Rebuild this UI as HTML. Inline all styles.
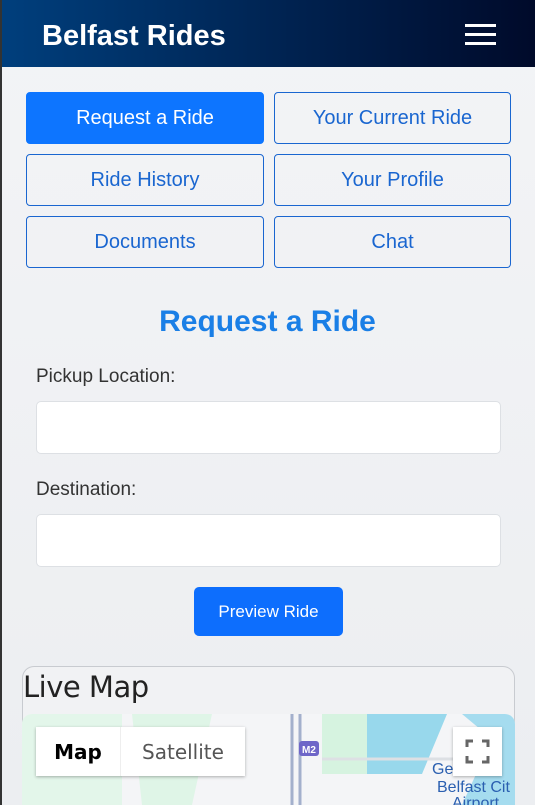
<!DOCTYPE html>
<html><head><style>
html,body{margin:0;width:535px;height:805px;overflow:hidden}
body{font-family:"Liberation Sans",sans-serif;background:linear-gradient(#f3f4f6,#eceef1);position:relative}
.lb{position:absolute;left:0;top:0;width:2px;height:805px;background:#333}
.hd{position:absolute;left:0;top:0;width:535px;height:67px;background:linear-gradient(90deg,#003f7d,#000a2a)}
.hd h1{position:absolute;left:42px;top:20px;margin:0;color:#fff;font:bold 29px "Liberation Sans",sans-serif}
.hb{position:absolute;left:465px;width:31px;height:3px;background:#fff}
.b{position:absolute;width:238px;height:52px;border:1px solid #1a66d0;border-radius:4px;box-sizing:border-box;color:#1a66d0;font:20px "Liberation Sans",sans-serif;display:flex;align-items:center;justify-content:center}
.b.a{background:#0d75ff;border-color:#0d75ff;color:#fff}
h2{position:absolute;top:305px;left:0;width:535px;text-align:center;margin:0;font:bold 30px "Liberation Sans",sans-serif;color:#1a7fe6}
.l{position:absolute;left:36px;font-size:19px;color:#333}
.i{position:absolute;left:36px;width:465px;height:53px;background:#fff;border:1px solid #dde0e4;border-radius:5px;box-sizing:border-box}
.pv{position:absolute;left:194px;top:587px;width:149px;height:49px;background:#0d6efd;color:#fff;border-radius:5px;font-size:17px;display:flex;align-items:center;justify-content:center}
.card{position:absolute;left:22px;top:666px;width:493px;height:160px;border:1px solid #c8cbd0;border-radius:12px;box-sizing:border-box;background:#f1f2f4}
.lm{position:absolute;left:23px;top:670px;font:29px "DejaVu Sans",sans-serif;color:#222;letter-spacing:-0.5px}
.map{position:absolute;left:22px;top:714px;width:493px;height:91px;background:#f4f5f7;border-radius:10px 10px 0 0;overflow:hidden}
</style></head><body>
<div class="hd"><h1>Belfast Rides</h1><div class="hb" style="top:24px"></div><div class="hb" style="top:33px"></div><div class="hb" style="top:42px"></div></div>
<div class="lb"></div>
<div class="b a" style="left:26px;top:92px">Request a Ride</div>
<div class="b" style="left:274px;top:92px;width:237px">Your Current Ride</div>
<div class="b" style="left:26px;top:154px">Ride History</div>
<div class="b" style="left:274px;top:154px;width:237px">Your Profile</div>
<div class="b" style="left:26px;top:216px">Documents</div>
<div class="b" style="left:274px;top:216px;width:237px">Chat</div>
<h2>Request a Ride</h2>
<div class="l" style="top:366px">Pickup Location:</div>
<div class="i" style="top:401px"></div>
<div class="l" style="top:479px">Destination:</div>
<div class="i" style="top:514px"></div>
<div class="pv">Preview Ride</div>
<div class="card" style="height:139px;border-bottom:none;border-radius:12px 12px 0 0"></div>
<div class="lm">Live Map</div>
<div class="map">
<svg width="493" height="91" style="position:absolute;left:0;top:0">
<rect x="0" y="0" width="100" height="91" fill="#e3f6ea"/>
<path d="M110 0 H190 L170 91 H120 Z" fill="#dff5e7"/>
<rect x="300" y="0" width="45" height="60" fill="#d6f3e0"/>
<path d="M345 0 H493 V91 H440 L470 25 L440 0 Z" fill="#a5dcef"/>
<path d="M345 0 H425 L400 60 H345 Z" fill="#98d8ec"/>
<path d="M270 0 V91 M278 0 V91" stroke="#a3b0cc" stroke-width="3"/>
<path d="M300 45 L440 45" stroke="#dde0e4" stroke-width="3"/>
<rect x="277" y="27" width="20" height="15" rx="3" fill="#6e66c8"/>
<text x="280" y="39" font-size="10" fill="#fff" font-family="Liberation Sans" font-weight="bold">M2</text>
<text x="410" y="60" font-size="16" fill="#2a5fb0" font-family="Liberation Sans">Ge</text>
<text x="415" y="78" font-size="16" fill="#2a5fb0" font-family="Liberation Sans">Belfast Cit</text>
<text x="430" y="94" font-size="16" fill="#2a5fb0" font-family="Liberation Sans">Airport</text>
</svg>
<div style="position:absolute;left:14px;top:13px;width:209px;height:49px;background:#fff;box-shadow:0 1px 3px rgba(0,0,0,.3);display:flex;font-family:'DejaVu Sans',sans-serif;font-size:20px">
<div style="width:84px;display:flex;align-items:center;justify-content:center;font-weight:bold;color:#000;border-right:1px solid #eee">Map</div>
<div style="flex:1;display:flex;align-items:center;justify-content:center;color:#555">Satellite</div></div>
<div style="position:absolute;left:431px;top:13px;width:49px;height:49px;background:#fff;box-shadow:0 1px 3px rgba(0,0,0,.3)">
<svg width="49" height="49"><path d="M14 20V14H20 M29 14H35V20 M35 29V35H29 M20 35H14V29" stroke="#666" stroke-width="3" fill="none"/></svg></div>
</div>
</body></html>
